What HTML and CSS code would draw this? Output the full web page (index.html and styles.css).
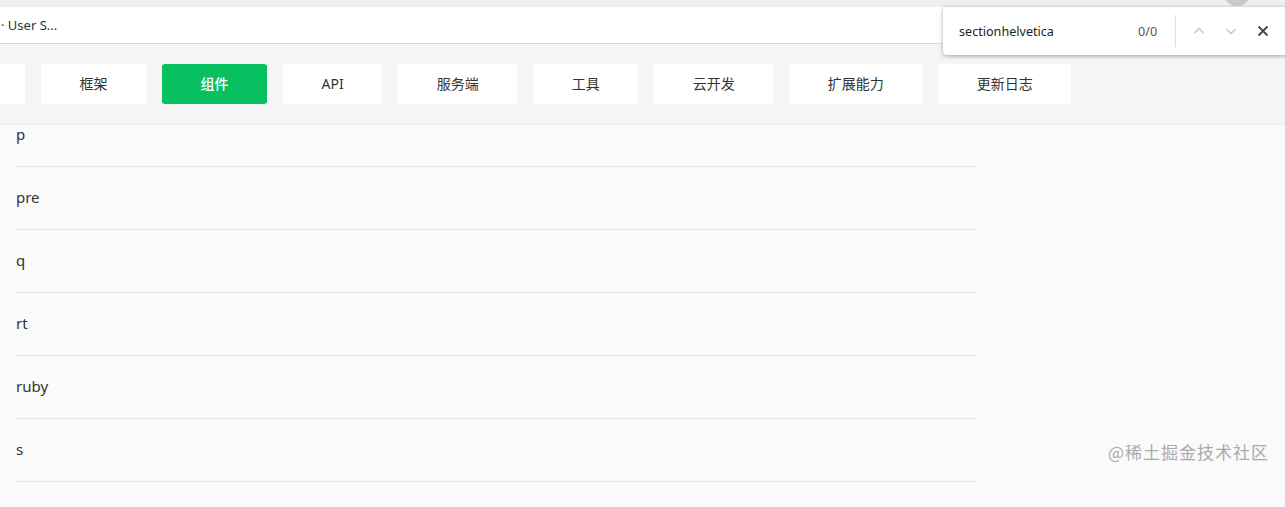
FILE: index.html
```html
<!DOCTYPE html>
<html lang="zh-CN">
<head>
	<meta charset="UTF-8">
	<title>组件</title>
	<link rel="stylesheet" href="styles.css">
</head>
<body>
	<div class="topline"><span class="dot"></span></div>
	<div class="tabbar">
		<span class="tab">· User S...</span>
	</div>

	<div class="nav">
		<ul class="navlist">
			<li><a href="###">指南</a></li>
			<li><a href="###">框架</a></li>
			<li class="on"><a href="###">组件</a></li>
			<li><a href="###">API</a></li>
			<li><a href="###">服务端</a></li>
			<li><a href="###">工具</a></li>
			<li><a href="###">云开发</a></li>
			<li><a href="###">扩展能力</a></li>
			<li><a href="###">更新日志</a></li>
		</ul>
	</div>

	<div class="main">
		<ul class="tags">
			<li>p</li>
			<li>pre</li>
			<li>q</li>
			<li>rt</li>
			<li>ruby</li>
			<li>s</li>
		</ul>
	</div>

	<!-- 查找栏 -->
	<div class="find">
		<span class="find-text">sectionhelvetica</span>
		<span class="find-count">0/0</span>
		<span class="find-line"></span>
		<span class="find-btn">
			<svg width="14" height="14" viewBox="0 0 14 14"><path d="M2.5 9 L7 4.5 L11.5 9" fill="none" stroke="#c4c4c4" stroke-width="1.4"/></svg>
		</span>
		<span class="find-btn">
			<svg width="14" height="14" viewBox="0 0 14 14"><path d="M2.5 5 L7 9.5 L11.5 5" fill="none" stroke="#c4c4c4" stroke-width="1.4"/></svg>
		</span>
		<span class="find-btn">
			<svg width="14" height="14" viewBox="0 0 14 14"><path d="M2.5 2.5 L11.5 11.5 M11.5 2.5 L2.5 11.5" fill="none" stroke="#444" stroke-width="1.8"/></svg>
		</span>
	</div>

	<div class="mark">@稀土掘金技术社区</div>
</body>
</html>
```

FILE: styles.css
```css
*{
	margin: 0;
	padding: 0;
}
ul,li{
	list-style: none;
}
a{
	text-decoration: none;
	color: inherit;
}
html,body{
	height: 100%;
	overflow: hidden;
}
body{
	background-color: #fafafa;
	font-family: "Noto Sans", "Noto Sans CJK SC", sans-serif;
	color: #333;
}
.topline{
	height: 7px;
	background-color: #efefef;
	position: relative;
}
.dot{
	position: absolute;
	left: 1223px;
	top: -22px;
	width: 28px;
	height: 28px;
	border-radius: 50%;
	background-color: #c9c9c9;
}
.tabbar{
	height: 36px;
	background-color: #fff;
	border-bottom: 1px solid #dadada;
	display: flex;
	align-items: center;
}
.tab{
	font-size: 13px;
	color: #333;
	padding-left: 1px;
}
.nav{
	height: 80px;
	background-color: #f5f5f5;
	border-bottom: 1px solid #ececec;
	display: flex;
	align-items: center;
	overflow: hidden;
}
.navlist{
	display: flex;
	gap: 16px;
	margin-left: -80px;
}
.navlist li{
	height: 40px;
	line-height: 40px;
	padding: 0 38.5px;
	background-color: #fff;
	border-radius: 3px;
	font-size: 14px;
	color: #333;
	white-space: nowrap;
}
.navlist li.on{
	background-color: #07c160;
	color: #fff;
	font-weight: 500;
}
.main{
	overflow: hidden;
	height: 400px;
}
.tags{
	width: 960px;
	margin-left: 16px;
	margin-top: -21px;
}
.tags li{
	height: 62px;
	line-height: 60px;
	border-bottom: 1px solid #e4e4e4;
	font-size: 15px;
	color: #333;
}
.find{
	position: absolute;
	left: 943px;
	top: 7px;
	width: 350px;
	height: 48px;
	background-color: #fff;
	border-radius: 4px;
	box-shadow: 0 1px 4px rgba(0,0,0,0.35);
	display: flex;
	align-items: center;
	font-size: 12.6px;
}
.find-text{
	margin-left: 16px;
	width: 179px;
	color: #222;
}
.find-count{
	color: #555;
	width: 37px;
}
.find-line{
	width: 1px;
	height: 32px;
	background-color: #e0e0e0;
	margin-right: 7px;
}
.find-btn{
	width: 32px;
	height: 32px;
	display: flex;
	align-items: center;
	justify-content: center;
}
.mark{
	position: absolute;
	left: 1108px;
	top: 439px;
	font-size: 17px;
	color: #aaa;
	font-family: "Noto Sans CJK SC", sans-serif;
	letter-spacing: 1px;
}
```
